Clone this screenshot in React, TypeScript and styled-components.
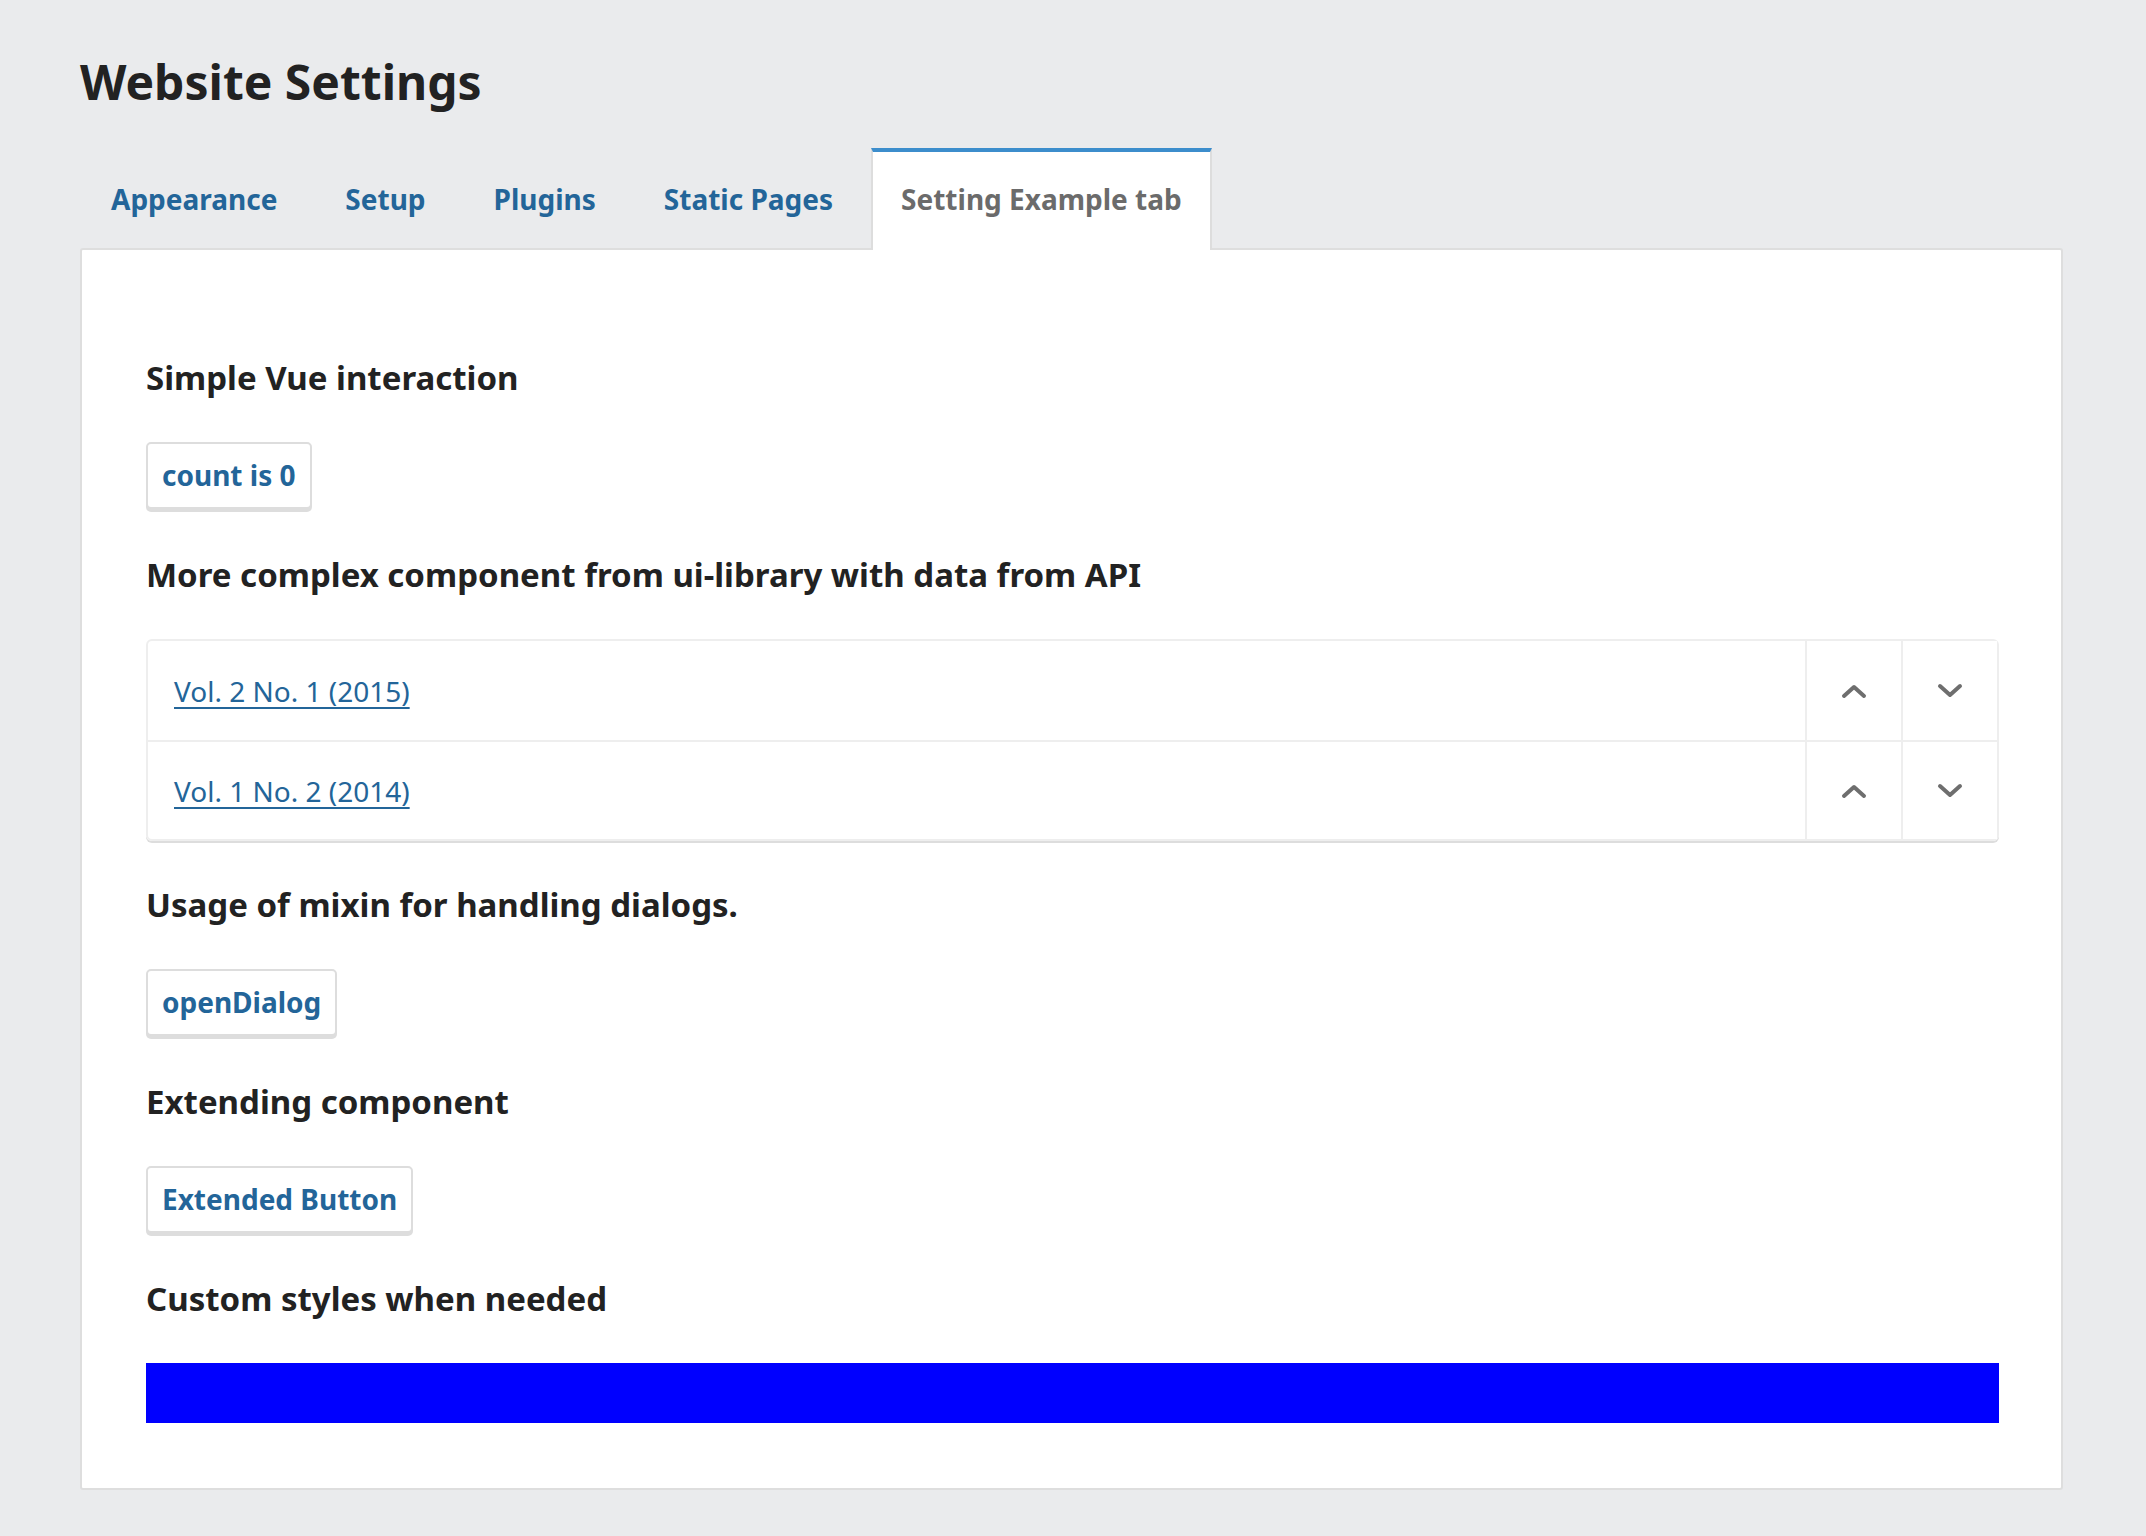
import React, { useState } from "react";
import styled, { createGlobalStyle } from "styled-components";

const GlobalStyle = createGlobalStyle`
  html, body {
    margin: 0;
    padding: 0;
    background: #eaebed;
    font-family: "Noto Sans", "Open Sans", sans-serif;
    color: #222;
  }
  * { box-sizing: border-box; }
`;

const Page = styled.div`
  padding: 52px 83px 48px 80px;
`;

const Title = styled.h1`
  margin: 0;
  font-size: 48px;
  line-height: 60px;
  font-weight: 700;
  color: #222;
`;

const TabList = styled.div`
  display: flex;
  align-items: flex-end;
  gap: 8px;
  margin-top: 36px;
  padding-left: 1px;
  position: relative;
  z-index: 1;
`;

const Tab = styled.button<{ $active?: boolean }>`
  appearance: none;
  font-family: inherit;
  font-size: 28px;
  font-weight: 700;
  line-height: 40px;
  height: 102px;
  padding: 0 28px 5px;
  margin-bottom: -2px;
  cursor: pointer;
  background: ${(p) => (p.$active ? "#fff" : "transparent")};
  color: ${(p) => (p.$active ? "#6b6b6b" : "#236599")};
  border: 2px solid ${(p) => (p.$active ? "#dddddd" : "transparent")};
  border-top: 4px solid ${(p) => (p.$active ? "#3c8dcc" : "transparent")};
  border-bottom: none;
  border-radius: 0;
`;

const Panel = styled.div`
  background: #fff;
  border: 2px solid #dedede;
  border-radius: 3px;
  padding: 106px 62px 65px 64px;
  display: flex;
  flex-direction: column;
  align-items: flex-start;
  gap: 42px;
`;

const Heading = styled.h2`
  margin: 0;
  font-size: 33px;
  line-height: 44px;
  font-weight: 700;
  color: #222;
`;

const Button = styled.button`
  appearance: none;
  font-family: inherit;
  font-size: 28px;
  font-weight: 700;
  line-height: 40px;
  color: #236599;
  background: #fff;
  border: 2px solid #dddddd;
  border-radius: 5px;
  box-shadow: 0 3px 0 #dddddd;
  padding: 11px 14px 12px;
  margin-bottom: 2px;
  cursor: pointer;
`;

const List = styled.div`
  align-self: stretch;
  border: 2px solid #eeeeee;
  border-radius: 6px;
  box-shadow: 0 2px 0 #dddddd;
  display: flex;
  flex-direction: column;
`;

const Row = styled.div`
  display: flex;
  align-items: stretch;
  height: 99px;
  & + & {
    border-top: 2px solid #eeeeee;
  }
`;

const RowLabel = styled.div`
  flex: 1;
  display: flex;
  align-items: center;
  padding-left: 26px;
`;

const IssueLink = styled.a`
  font-size: 28px;
  line-height: 40px;
  color: #236599;
  text-decoration: underline;
  text-underline-offset: 5px;
  text-decoration-thickness: 2px;
`;

const OrderButton = styled.button`
  appearance: none;
  width: 96px;
  border: none;
  border-left: 2px solid #eeeeee;
  background: #fff;
  display: flex;
  align-items: center;
  justify-content: center;
  cursor: pointer;
  padding: 0;
  color: #6e6e6e;
`;

const BlueBar = styled.div`
  align-self: stretch;
  height: 60px;
  background: #0000ff;
`;

const Chevron = ({ dir }: { dir: "up" | "down" }) => (
  <svg width="28" height="18" viewBox="0 0 28 18" aria-hidden="true">
    <polyline
      points={dir === "up" ? "4,14 14,5 24,14" : "4,4 14,13 24,4"}
      fill="none"
      stroke="currentColor"
      strokeWidth="4"
      strokeLinecap="round"
      strokeLinejoin="round"
    />
  </svg>
);

const tabs = ["Appearance", "Setup", "Plugins", "Static Pages", "Setting Example tab"];
const issues = ["Vol. 2 No. 1 (2015)", "Vol. 1 No. 2 (2014)"];

export default function App() {
  const [count, setCount] = useState(0);
  return (
    <>
      <GlobalStyle />
      <Page>
        <Title>Website Settings</Title>
        <TabList>
          {tabs.map((t, i) => (
            <Tab key={t} $active={i === tabs.length - 1}>
              {t}
            </Tab>
          ))}
        </TabList>
        <Panel>
          <Heading>Simple Vue interaction</Heading>
          <Button onClick={() => setCount(count + 1)}>count is {count}</Button>
          <Heading>More complex component from ui-library with data from API</Heading>
          <List>
            {issues.map((issue) => (
              <Row key={issue}>
                <RowLabel>
                  <IssueLink href="#">{issue}</IssueLink>
                </RowLabel>
                <OrderButton aria-label="Move up">
                  <Chevron dir="up" />
                </OrderButton>
                <OrderButton aria-label="Move down">
                  <Chevron dir="down" />
                </OrderButton>
              </Row>
            ))}
          </List>
          <Heading>Usage of mixin for handling dialogs.</Heading>
          <Button>openDialog</Button>
          <Heading>Extending component</Heading>
          <Button>Extended Button</Button>
          <Heading>Custom styles when needed</Heading>
          <BlueBar />
        </Panel>
      </Page>
    </>
  );
}
